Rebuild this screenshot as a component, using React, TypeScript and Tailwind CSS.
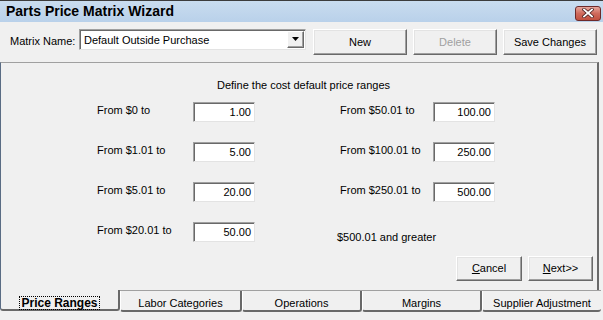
import React from "react";

const font = { fontFamily: '"Liberation Sans", Arial, sans-serif' };

function Sunken({ value }: { value: string }) {
  return (
    <div className="w-[62px] h-[20px] bg-white border border-t-[#a0a0a0] border-l-[#a0a0a0] border-b-[#e3e3e3] border-r-[#e3e3e3] shadow-[inset_1px_1px_0_#696969] text-right pr-[3px] text-[11px] leading-[19px] text-black">
      {value}
    </div>
  );
}

function RaisedBtn({
  children,
  className,
  disabled,
}: {
  children: React.ReactNode;
  className?: string;
  disabled?: boolean;
}) {
  return (
    <div
      className={
        "flex items-center justify-center bg-[#f0f0f0] border border-t-white border-l-white border-b-[#696969] border-r-[#696969] shadow-[inset_-1px_-1px_0_#a0a0a0,inset_1px_1px_0_#e3e3e3] text-[11px] " +
        (disabled ? "text-[#a0a0a0] " : "text-black ") +
        (className ?? "")
      }
    >
      {children}
    </div>
  );
}

function Row({
  l1,
  v1,
  l2,
  v2,
}: {
  l1: string;
  v1: string;
  l2?: string;
  v2?: string;
}) {
  return (
    <div className="flex h-[20px] items-start">
      <div className="w-[96px] text-[11px] leading-[16px] pt-0">{l1}</div>
      <Sunken value={v1} />
      <div className="w-[85px]" />
      {l2 !== undefined && v2 !== undefined ? (
        <>
          <div className="w-[93px] text-[11px] leading-[16px]">{l2}</div>
          <Sunken value={v2} />
        </>
      ) : (
        <div className="text-[11px] leading-[16px] mt-[7px] -ml-[3px]">$500.01 and greater</div>
      )}
    </div>
  );
}

function Tab({ label, w, last }: { label: string; w: string; last?: boolean }) {
  return (
    <div
      className={
        "h-[21px] flex items-center justify-center text-[11px] border-b-2 border-b-[#696969] border-l border-l-white rounded-bl-[3px] rounded-br-[3px] " +
        (last ? "border-r-0 " : "border-r-2 border-r-[#696969] ") +
        w
      }
    >
      <span className="translate-y-[3px]">{label}</span>
    </div>
  );
}

export default function App() {
  return (
    <div className="w-[603px] h-[320px] bg-[#f0f0f0] overflow-hidden text-black" style={font}>
      {/* title bar */}
      <div className="h-[22px] border-t border-t-[#3c3c3c] bg-gradient-to-b from-[#c9dcef] to-[#b9d1ea] flex items-center justify-between pl-[6px] pr-[2px]">
        <div className="text-[14px] font-bold leading-[18px] -mt-[1px]">Parts Price Matrix Wizard</div>
        <div className="w-[26px] h-[15px] mt-[3px] rounded-[3px] border border-[#6d2a2a] bg-gradient-to-b from-[#e6a69c] via-[#cf6a5c] to-[#c2503f] flex items-center justify-center">
          <svg width="12" height="10" viewBox="0 0 12 10">
            <path d="M2 1.5 L10 8.5 M10 1.5 L2 8.5" stroke="#4a2020" strokeWidth="3.4" strokeLinecap="square" />
            <path d="M2 1.5 L10 8.5 M10 1.5 L2 8.5" stroke="#ffffff" strokeWidth="1.8" strokeLinecap="square" />
          </svg>
        </div>
      </div>

      {/* toolbar row */}
      <div className="h-[40px] flex items-start pl-[10px] pt-[7px]">
        <div className="w-[69px] text-[11px] leading-[14px] mt-[5px]">Matrix Name:</div>
        <div className="w-[227px] h-[21px] bg-white border border-t-[#a0a0a0] border-l-[#a0a0a0] border-b-[#e3e3e3] border-r-[#e3e3e3] shadow-[inset_1px_1px_0_#696969] flex items-center">
          <div className="flex-1 pl-[4px] text-[11px] leading-[14px]">Default Outside Purchase</div>
          <div className="w-[17px] h-[17px] mr-[1px] bg-[#f0f0f0] border border-t-white border-l-white border-b-[#696969] border-r-[#696969] shadow-[inset_-1px_-1px_0_#a0a0a0] flex items-center justify-center">
            <svg width="8" height="5" viewBox="0 0 8 5">
              <path d="M0 0 H7 L3.5 4 Z" fill="#000" />
            </svg>
          </div>
        </div>
        <RaisedBtn className="ml-[7px] w-[94px] h-[26px]">New</RaisedBtn>
        <RaisedBtn className="ml-[6px] w-[84px] h-[26px]" disabled>
          Delete
        </RaisedBtn>
        <RaisedBtn className="ml-[6px] w-[94px] h-[26px]">Save Changes</RaisedBtn>
      </div>

      {/* panel */}
      <div className="ml-[0px] w-[599px] h-[229px] border-t border-l border-t-[#a0a0a0] border-l-[#5a6c84] border-r-2 border-r-[#696969] border-b border-b-[#a0a0a0] flex flex-col">
        <div className="pt-[14px] pl-[216px] text-[11px] leading-[16px]">Define the cost default price ranges</div>
        <div className="mt-[9px] pl-[96px] flex flex-col gap-[20px]">
          <Row l1="From $0 to" v1="1.00" l2="From $50.01 to" v2="100.00" />
          <Row l1="From $1.01 to" v1="5.00" l2="From $100.01 to" v2="250.00" />
          <Row l1="From $5.01 to" v1="20.00" l2="From $250.01 to" v2="500.00" />
          <Row l1="From $20.01 to" v1="50.00" />
        </div>
        <div className="mt-[14px] flex justify-end pr-[4px] gap-[6px]">
          <RaisedBtn className="w-[66px] h-[25px]">
            <span>
              <span className="underline">C</span>ancel
            </span>
          </RaisedBtn>
          <RaisedBtn className="w-[65px] h-[25px]">
            <span>
              <span className="underline">N</span>ext&gt;&gt;
            </span>
          </RaisedBtn>
        </div>
      </div>

      {/* tabs */}
      <div className="flex -mt-[1px] h-[22px]">
        <div className="w-[120px] h-[21px] flex items-center justify-center border-l border-l-[#5a6c84] border-b-2 border-b-[#696969] border-r-2 border-r-[#696969] rounded-bl-[3px] rounded-br-[3px] bg-[#f0f0f0] relative z-10">
          <span className="translate-y-[3px] text-[12px] font-bold leading-[12px] px-[1px] outline outline-1 outline-dotted outline-black">Price Ranges</span>
        </div>
        <div className="flex border-t border-t-[#a0a0a0] h-[22px]">
          <Tab label="Labor Categories" w="w-[122px]" />
          <Tab label="Operations" w="w-[120px]" />
          <Tab label="Margins" w="w-[120px]" />
          <Tab label="Supplier Adjustment" w="w-[119px]" last />
        </div>
      </div>
    </div>
  );
}
